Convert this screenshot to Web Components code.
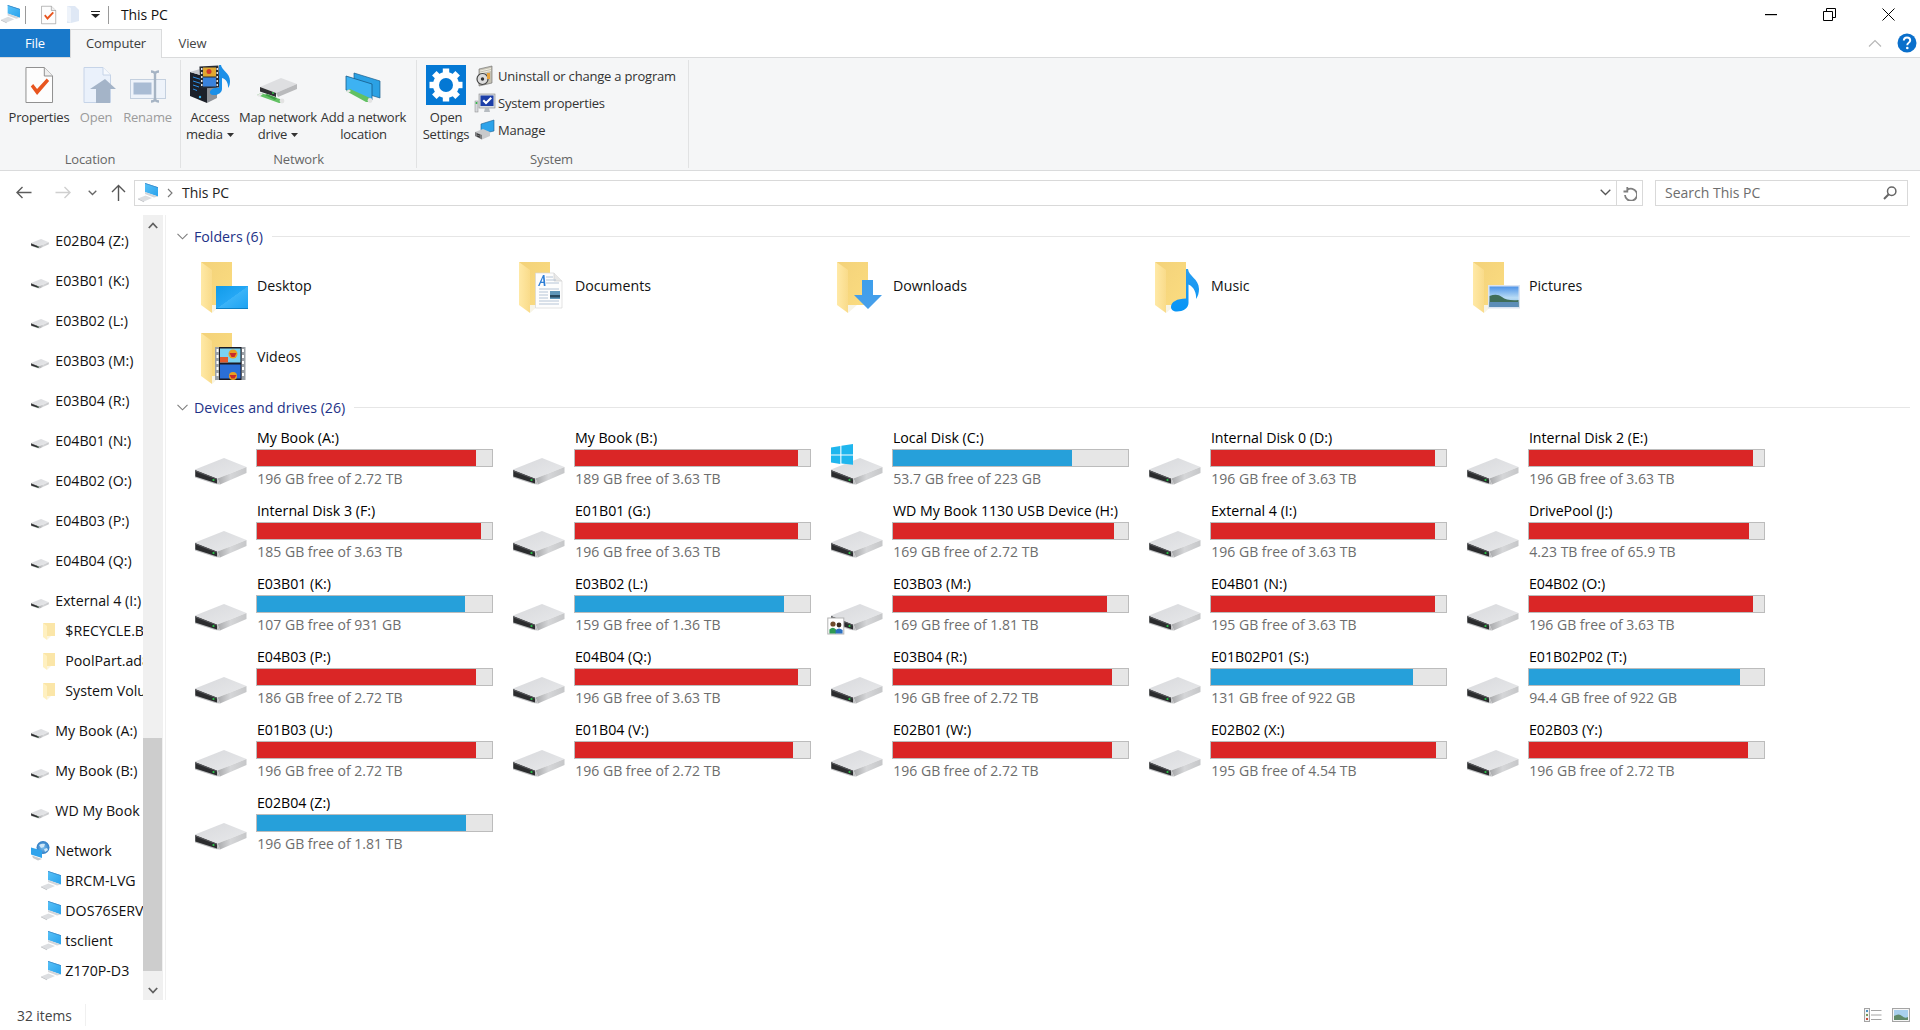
<!DOCTYPE html>
<html lang="en"><head><meta charset="utf-8"><title>This PC</title>
<style>
html,body{margin:0;padding:0;height:100%;background:#fff;overflow:hidden}
body{font-family:"Open Sans","Noto Sans","Liberation Sans",sans-serif;font-size:14px}
</style></head><body>
<x-app></x-app>
<script>
const FOLDER=`<defs><linearGradient id="fb" x1="0" y1="0" x2="1" y2="1"><stop offset="0" stop-color="#f3d27a"/><stop offset="1" stop-color="#fbdc80"/></linearGradient><linearGradient id="ff" x1="0" y1="0" x2="1" y2="0"><stop offset="0" stop-color="#ffe9a6"/><stop offset="1" stop-color="#f9db8a"/></linearGradient></defs><path d="M0 0H31V43H11Z" fill="url(#fb)"/><path d="M11 43H20L11 51Z" fill="#f7f4e6"/><path d="M0 0L11 8V51L0 43Z" fill="url(#ff)"/>`;
const DRIVE=`<defs><linearGradient id="ds" x1="0" y1="0" x2="1" y2="0"><stop offset="0" stop-color="#a8a9ab"/><stop offset=".45" stop-color="#d5d6d8"/><stop offset="1" stop-color="#c6c7c9"/></linearGradient><linearGradient id="dt" x1="0" y1="0" x2="1" y2="1"><stop offset="0" stop-color="#d8d9dc"/><stop offset="1" stop-color="#e8e9eb"/></linearGradient></defs><path d="M0 11.5L29 0L51.5 9L22.5 20.5Z" fill="url(#dt)"/><path d="M22.5 20.5L51.5 9V15L25 26.5Z" fill="url(#ds)"/><path d="M0 11.5L22.5 20.5L25 26.5L20 26L0 19.5Z" fill="#bfc0c2"/><path d="M.3 12.3L22 20.8V25.4L.3 18.5Z" fill="#2b2c2e"/><path d="M.3 12.3L22 20.8V21.8L.3 13.6Z" fill="#55565a"/><circle cx="18.5" cy="22" r="1.1" fill="#27c846"/>`;
const WIN=`<path d="M0 -10.6L9.3 -12V-3.6H0ZM10.4 -12.2L22 -14V-3.6H10.4ZM0 -2.5H9.3V6L0 4.6ZM10.4 -2.5H22V6.8L10.4 5.6Z" fill="#1fb6ee"/>`;
const SHARE=`<rect x="-3.2" y="14" width="16" height="16" fill="#fff" stroke="#b3b3b3"/><circle cx="2" cy="20" r="2.6" fill="#6e4a2c"/><path d="M-1.6 29.5V25.5Q2 22 5 25.5V29.5Z" fill="#2f9a52"/><circle cx="8" cy="21" r="2.4" fill="#3a2a20"/><path d="M4.6 29.5V26Q8 23 11.6 26V29.5Z" fill="#2c6fc0"/>`;
const PC=`<defs><linearGradient id="pcg" x1="0" y1="0" x2="1" y2="1"><stop offset="0" stop-color="#58c2f8"/><stop offset="1" stop-color="#2aa2ec"/></linearGradient></defs><path d="M7 0L20 4.2V13.5L7 9Z" fill="url(#pcg)"/><path d="M7 0L20 4.2V4.900L7 .7Z" fill="#3a86c4"/><path d="M7 9L20 13.5L16 14.6L7 11Z" fill="#d4d6da"/><path d="M0 15.5L7.5 12.4L14 15L6 18.5Z" fill="#dcdee1"/><path d="M0 15.5L6 18.5V19.3L0 16.3Z" fill="#b4b6ba"/>`;
const PAGE=(s,f,c)=>`<path d="M1 .5H${20}L${28.5} 9V35.5H1Z" fill="${f}" stroke="${s}"/><path d="M20 .5V9H28.5" fill="#efefef" stroke="${s}"/>${c}`;
const ICONS={
 folder:['0 0 48 51',FOLDER],
 desktop:['0 0 48 51',FOLDER+`<defs><linearGradient id="d1" x1="0" y1="0" x2="1" y2="1"><stop offset="0" stop-color="#119be9"/><stop offset=".5" stop-color="#24a7f5"/><stop offset=".51" stop-color="#3ab3f8"/><stop offset="1" stop-color="#1ca2f2"/></linearGradient></defs><rect x="15" y="24" width="32" height="23" fill="url(#d1)"/><rect x="15" y="46" width="32" height="1" fill="#0d7fc4"/>`],
 documents:['0 0 48 51',FOLDER+`<path d="M16.5 11H35L43 19V46H16.5Z" fill="#fdfdfd" stroke="#d7d7d7" stroke-width=".7"/><path d="M35 11V19H43" fill="#e8e8e8" stroke="#cfcfcf" stroke-width=".7"/><path d="M19 24L24 13H25.500L26.500 24H24.800L24.500 21H21.800L20.500 24ZM22.400 19.700H24.400L24 15.500Z" fill="#2f7fd6"/><path d="M27 15H34M27 18H37M27 21H40M20 27H40M20 30H29M20 33H29M20 36H29M20 39H40M20 42H40" stroke="#b5c4d6" stroke-width="1"/><rect x="31" y="29" width="10" height="8" fill="#5f96b8"/><rect x="31" y="33" width="10" height="2.5" fill="#27495f"/>`],
 downloads:['0 0 48 51',FOLDER+`<defs><linearGradient id="d2" x1="0" y1="0" x2="0" y2="1"><stop offset="0" stop-color="#3d9fec"/><stop offset="1" stop-color="#489fea"/></linearGradient></defs><path d="M25 18H36V33H45L31 47L17 33H25Z" fill="url(#d2)"/>`],
 music:['0 0 48 51',FOLDER+`<defs><linearGradient id="d3" x1="0" y1="0" x2="0" y2="1"><stop offset="0" stop-color="#2a9df0"/><stop offset="1" stop-color="#0795f6"/></linearGradient></defs><path d="M31 7H33C33.600 14 44 17 44 27C44 31 43 34 41 37C41.500 31 39 25 33.500 22.500V41C33.500 46 28 49.500 22 49.500C18 49.500 16 47.500 16 45C16 40 22 36.500 31 36.500Z" fill="url(#d3)"/>`],
 pictures:['0 0 48 51',FOLDER+`<defs><linearGradient id="d4" x1="0" y1="0" x2="0" y2="1"><stop offset="0" stop-color="#4f94e8"/><stop offset=".55" stop-color="#b9dcf5"/><stop offset="1" stop-color="#7db2d8"/></linearGradient></defs><rect x="15" y="23" width="32" height="23.500" fill="#dbe4f2"/><rect x="16.500" y="24.500" width="29" height="20.500" fill="url(#d4)"/><path d="M16.500 34Q24 31 29 35T45.500 38V45H16.500Z" fill="#3f6d58"/><rect x="16.500" y="40" width="29" height="5" fill="#5c8db8"/>`],
 videos:['0 0 48 51',FOLDER+`<rect x="14" y="14" width="30.500" height="33" fill="#9aa0a6"/><rect x="18" y="14" width="22.500" height="33" fill="#1a1a24"/><path d="M15.500 16h2v3h-2zM15.500 22h2v3h-2zM15.500 28h2v3h-2zM15.500 34h2v3h-2zM15.500 40h2v3h-2zM41 16h2v3h-2zM41 22h2v3h-2zM41 28h2v3h-2zM41 34h2v3h-2zM41 40h2v3h-2z" fill="#fff"/><rect x="19" y="15.500" width="20.500" height="14" fill="#7bd2f0"/><rect x="19" y="24" width="8" height="5.500" fill="#e25a2b"/><circle cx="32" cy="21" r="4.500" fill="#e8a020"/><path d="M28.500 20h7l-2 4h-3z" fill="#c92a2a"/><rect x="19" y="31.500" width="20.500" height="14" fill="#2b6fd6"/><circle cx="32" cy="43" r="4" fill="#e8a020"/><path d="M28.500 42h7l-2 3.500h-3z" fill="#c92a2a"/>`],
 drive:['0 0 52 28',DRIVE],
 cdrive:['0 0 52 28',DRIVE+WIN],
 sdrive:['0 0 52 28',DRIVE+SHARE],
 mfolder:['0 0 12 17',`<path d="M0 0H12V13H3.500Z" fill="#fbe6a8"/><path d="M0 0L4 3V17L0 14Z" fill="#fff0c0"/><path d="M4 13H8L4 17Z" fill="#fbf4de"/>`],
 pc:['0 0 20 20',PC],
 net:['0 0 19 19',`<defs><radialGradient id="g1"><stop offset="0" stop-color="#7fc0ee"/><stop offset="1" stop-color="#2f7cc4"/></radialGradient></defs><circle cx="12" cy="6.500" r="6.500" fill="url(#g1)"/><path d="M8 4q3 -2 6 -1l-1 3l-3 1zM13 8l3 -1l1 2l-3 2z" fill="#cfe7f7"/><path d="M0 6.500L11 9.500V17L0 13.500Z" fill="#2fa3ec"/><path d="M1 14.500L11 18L7 19.500L2 17Z" fill="#c5c8cc"/>`],
 check:['0 0 29 36',PAGE('#8f8f8f','#fdfdfd',`<path d="M6 19.500L8.500 17L12.500 22L22.500 11.500L25 14L12.500 28Z" fill="#e8551f"/>`)],
 chk2:['0 0 29 36',PAGE('#7a7a7a','#fdfdfd',`<path d="M6 19.500L8.500 17L12.500 22L22.500 11.500L25 14L12.500 28Z" fill="#e8551f"/>`)],
 open:['0 0 34 36',`<path d="M1 .5H20L27.500 8V35.500H1Z" fill="#eaf1fb" stroke="#c6d4e8"/><path d="M20 .5V8H27.500" fill="#f6f9fd" stroke="#c6d4e8"/><path d="M14 36V22H8L23 12L34 22H28V36Z" fill="#a4b4c8" transform="translate(-1 0)"/>`],
 rename:['0 0 36 33',`<rect x=".5" y="9.500" width="35" height="19" fill="#eef3fa" stroke="#c4d0df"/><rect x="3.500" y="12.500" width="18" height="12" fill="#a9bcd4"/><path d="M21 1.500Q24 1.500 25 3.500Q26 1.500 29 1.500M21 31.500Q24 31.500 25 29.500Q26 31.500 29 31.500M25 3.500V29.500" fill="none" stroke="#a6b4c4" stroke-width="2.400"/>`],
 media:['0 0 40 38',`<path d="M0 7L17 12V38L0 31Z" fill="#1c2029"/><path d="M17 12L27 9V33L17 38Z" fill="#8e9197"/><path d="M0 7L10 4L27 9L17 12Z" fill="#c9cbcf"/><path d="M3 12l8 2.500M3 16l8 2.500M3 20l6 2M3 24l4 1.500" stroke="#2c8fe6" stroke-width="1"/><circle cx="10" cy="32" r="1.200" fill="#35b6f2"/><rect x="10" y="1" width="19" height="22" fill="#262a33" transform="rotate(-3 20 12)"/><rect x="13" y="2.500" width="13" height="9" fill="#e0a830"/><rect x="13" y="12.500" width="13" height="9" fill="#3a82dc"/><circle cx="19" cy="6.500" r="2.500" fill="#d0392b"/><path d="M11 3h1.500v2H11zM11 7h1.500v2H11zM11 11h1.500v2H11zM11 15h1.500v2H11zM11 19h1.500v2H11zM26.500 3h1.500v2h-1.500zM26.500 7h1.500v2h-1.500zM26.500 11h1.500v2h-1.500zM26.500 15h1.500v2h-1.500zM26.500 19h1.500v2h-1.500z" fill="#e8e8e8"/><path d="M29 0H31C31.500 5 40 8 40 16C40 19 39.500 21 38 23C38.500 18 36 14 32 13V24C32 28 27 30.500 23 30C20 29.800 19 27 21 25C23 23 26 22.500 29 23Z" fill="#1a8fe8"/>`],
 mapdrive:['0 0 40 25',`<path d="M3 9L24 0L40 6L19 15Z" fill="#dedfe1"/><path d="M19 15L40 6V11L21 19Z" fill="#b9babc"/><path d="M3 9L19 15V19L3 13.500Z" fill="#2f3032"/><circle cx="16" cy="15" r=".9" fill="#36d04f"/><path d="M0 17L4 15L26 22L26 25L22 25Z" fill="#62c163"/><path d="M0 17L4 15L6 16L2 19Z" fill="#e8e8e8"/><circle cx="25" cy="23" r="2.400" fill="#e3e3e3"/><path d="M8 17L10 16L20 20L18 22Z" fill="#3e9f44"/>`],
 addnet:['0 0 34 30',`<path d="M8 0L34 8V25L8 17Z" fill="#2ba1e4" stroke="#1b5f8c" stroke-width=".7"/><path d="M0 3L26 11V27L0 17Z" fill="#3db2f2" stroke="#175a88" stroke-width=".8"/><path d="M0 18L4 16L24 25V29L20 29Z" fill="#62c163"/><circle cx="24" cy="27.500" r="2.400" fill="#e3e3e3"/><path d="M0 18L3 16.500L5 18L2 20Z" fill="#e6e6e6"/>`],
 gear:['0 0 40 40',`<rect width="40" height="40" fill="#0478d4"/><g fill="#fff"><rect x="16.800" y="3.500" width="6.400" height="33"/><rect x="16.800" y="3.500" width="6.400" height="33" transform="rotate(45 20 20)"/><rect x="16.800" y="3.500" width="6.400" height="33" transform="rotate(90 20 20)"/><rect x="16.800" y="3.500" width="6.400" height="33" transform="rotate(135 20 20)"/></g><circle cx="20" cy="20" r="10" fill="none" stroke="#fff" stroke-width="6"/><circle cx="20" cy="20" r="7" fill="#0478d4"/>`],
 uninstall:['0 0 18 20',`<path d="M4 3L17 0V17L4 20Z" fill="#c4c1b4" stroke="#6a6a6a" stroke-width=".6"/><path d="M5 5L16 2.500M5 7L16 4.500" stroke="#f1eee2" stroke-width="1"/><circle cx="7.500" cy="13" r="5.500" fill="#dcdcdc" stroke="#444" stroke-width="1.200"/><circle cx="7.500" cy="13" r="1.700" fill="#333"/><rect x="12" y="7" width="3" height="6" fill="#e8a33d"/>`],
 sysprop:['0 0 20 21',`<rect x="4" y="1" width="16" height="14" fill="#d8dce0" stroke="#888" stroke-width=".6"/><rect x="5.500" y="2.500" width="13" height="10.500" fill="#1c3ea8"/><path d="M7.500 8L9 6.500L11 8.500L15.500 4L17 5.500L11 11.500Z" fill="#fff"/><path d="M10 15H14L15 19H9Z" fill="#b7bcc1"/><rect x="0" y="8" width="3" height="11" fill="#d6d8dc" stroke="#888" stroke-width=".5"/><rect x=".7" y="9" width="1.600" height="2" fill="#35b84a"/>`],
 manage:['0 0 20 20',`<path d="M6 4L19 0V11L6 14Z" fill="#2da3ea" stroke="#1d5f90" stroke-width=".6"/><path d="M0 12L8 9L15 12V16L7 19.500L0 16Z" fill="#c9cacc"/><path d="M0 12L7 15V19.500L0 16Z" fill="#7b7c7e"/><path d="M2 14l3 1.200M2 16l3 1.200" stroke="#333"/>`]
};
function ce(name,html){customElements.define(name,class extends HTMLElement{constructor(){super();this.attachShadow({mode:'open'}).innerHTML=typeof html==='function'?html(this):html}})}
const A=(e,n,d='')=>e.getAttribute(n)??d;

customElements.define('x-ico',class extends HTMLElement{
 connectedCallback(){if(this.shadowRoot)return;const[vb,b]=ICONS[A(this,'name')];const r=this.attachShadow({mode:'open'});
 r.innerHTML=`<style>:host{display:block;flex:none;line-height:0}svg{display:block;overflow:visible}</style><svg xmlns="http://www.w3.org/2000/svg" viewBox="${vb}" width="${A(this,'w')}" height="${A(this,'h')}" preserveAspectRatio="none">${b}</svg>`}
});
customElements.define('x-app',class extends HTMLElement{constructor(){super();const r=this.attachShadow({mode:'open'});
r.innerHTML=`<style>:host{display:flex;flex-direction:column;width:1920px;height:1030px;overflow:hidden;font-family:"Open Sans","Noto Sans","Liberation Sans",sans-serif;font-size:14px;color:#000;background:#fff}
x-main{flex:1;min-height:0}</style>
<x-titlebar></x-titlebar><x-tabs></x-tabs><x-ribbon></x-ribbon><x-addr></x-addr><x-main></x-main><x-status></x-status>`}});

ce('x-titlebar',`<style>:host{display:flex;align-items:center;height:29px;flex:none;position:relative;font-size:14px}
.s{width:1px;height:18px;background:#9a9a9a}
.w{margin-left:auto;display:flex;align-items:center}
svg{display:block}</style>
<x-ico name="pc" w="19" h="19" style="margin:0 0 0 1px"></x-ico><span class="s" style="margin-left:5px"></span>
<x-ico name="chk2" w="15" h="18" style="margin-left:15px"></x-ico>
<svg width="12" height="17" style="margin-left:11px"><path d="M0 0H8L12 4V15L4 17H0Z" fill="#dfe8f5"/><path d="M0 0L4 2V17L0 15Z" fill="#eef3fa"/></svg>
<svg width="9" height="7" style="margin-left:12px"><path d="M0 0H9V1H0ZM0 3H9L4.500 7Z" fill="#222"/></svg>
<span class="s" style="margin-left:8px"></span><span style="margin-left:12px;color:#111;letter-spacing:-.1px">This PC</span>
<div class="w"><svg width="12" height="2" style="margin-right:46px"><rect width="12" height="1.200" fill="#000"/></svg>
<svg width="13" height="13" style="margin-right:46px"><path d="M.5 3.500H9.500V12.500H.5ZM3.500 3.500V.5H12.500V9.500H9.500" fill="none" stroke="#000"/></svg>
<svg width="13" height="13" style="margin-right:25px"><path d="M.5 .5L12.500 12.500M12.500 .5L.5 12.500" stroke="#000"/></svg></div>`);

ce('x-tabs',`<style>:host{display:flex;height:28px;flex:none;align-items:stretch;font-size:13px;letter-spacing:-.15px;box-sizing:border-box;position:relative;z-index:1}
div{display:flex;align-items:center;justify-content:center;box-sizing:border-box;color:#444}
.f{width:70px;background:#1979ca;color:#fff;height:28px;padding-bottom:1px}
.c{width:92px;background:#f5f6f7;border:1px solid #dadbdc;border-bottom:0;height:29px;color:#3c3c3c;padding-bottom:2px}
.v{width:61px;padding-left:0;margin-left:0;padding-bottom:1px}
.r{margin-left:auto;gap:15px;padding-right:3px}
svg{display:block}</style>
<div class="f">File</div><div class="c">Computer</div><div class="v">View</div>
<div class="r"><svg width="14" height="8"><path d="M1 7.500L7 1.500L13 7.500" fill="none" stroke="#b8b8b8" stroke-width="1.200"/></svg>
<svg width="20" height="20" viewBox="0 0 20 20"><circle cx="10" cy="10" r="9.500" fill="#0a6fcb"/><path d="M6.800 7.500Q7 4.500 10 4.500Q13.200 4.500 13.200 7.300Q13.200 9 11.500 10Q10.300 10.700 10.300 12.200" fill="none" stroke="#fff" stroke-width="2"/><circle cx="10.300" cy="15" r="1.300" fill="#fff"/></svg></div>`);

ce('x-ribbon',`<style>:host{display:flex;height:114px;flex:none;box-sizing:border-box;background:#f5f6f7;border-top:1px solid #dadbdc;border-bottom:1px solid #dadbdc;padding:2px 0 2px;margin-top:0}</style>
<x-group w="181" label="Location" pad="4">
 <x-btn w="70" icon="check" iw="28" ih="36">Properties</x-btn>
 <x-btn w="44" icon="open" iw="34" ih="36" ml="7" off>Open</x-btn>
 <x-btn w="59" icon="rename" iw="36" ih="33" off>Rename</x-btn>
</x-group>
<x-group w="236" label="Network" pad="3">
 <x-btn w="52" icon="media" iw="40" ih="38">Access<br>media <x-caret></x-caret></x-btn>
 <x-btn w="84" icon="mapdrive" iw="40" ih="25" ml="-2">Map network<br>drive <x-caret></x-caret></x-btn>
 <x-btn w="87" icon="addnet" iw="34" ih="30" ml="-2">Add a network<br>location</x-btn>
</x-group>
<x-group w="272" label="System" pad="4">
 <x-btn w="50" icon="gear" iw="40" ih="40" up="2">Open<br>Settings</x-btn>
 <x-list>
  <x-li icon="uninstall" iw="18" ih="20">Uninstall or change a program</x-li>
  <x-li icon="sysprop" iw="20" ih="21">System properties</x-li>
  <x-li icon="manage" iw="20" ih="20">Manage</x-li>
 </x-list>
</x-group>`);

ce('x-group',e=>`<style>:host{display:flex;flex-direction:column;width:${A(e,'w')}px;box-sizing:border-box;border-right:1px solid #e1e2e3;height:108px;flex:none}
.b{flex:1;display:flex;align-items:flex-start;padding-left:${A(e,'pad')}px;min-height:0}
.l{height:16px;line-height:15px;text-align:center;font-size:13px;letter-spacing:-.15px;color:#666;margin-top:2px;padding-right:${A(e,'label')==='System'?2:0}px}</style>
<div class="b"><slot></slot></div><div class="l">${A(e,'label')}</div>`);

ce('x-btn',e=>`<style>:host{display:flex;flex-direction:column;align-items:center;width:${A(e,'w')}px;flex:none;font-size:13px;letter-spacing:-.2px;line-height:17px;text-align:center;color:${e.hasAttribute('off')?'#9b9b9b':'#333'}}
.i{height:44px;display:flex;align-items:flex-end;padding-bottom:1px;box-sizing:border-box;margin-bottom:5px}
x-ico{margin-bottom:${-(+A(e,'up','0'))}px;margin-left:${A(e,'ml','0')}px}
.t{white-space:nowrap}</style>
<div class="i"><x-ico name="${A(e,'icon')}" w="${A(e,'iw')}" h="${A(e,'ih')}"></x-ico></div><div class="t"><slot></slot></div>`);

ce('x-caret',`<style>:host{display:inline-block;width:7px;height:4px;vertical-align:2px;margin-left:1px}svg{display:block}</style><svg width="7" height="4"><path d="M0 0H7L3.500 4Z" fill="#333"/></svg>`);
ce('x-list',`<style>:host{display:flex;flex-direction:column;margin-left:4px;padding-top:2.500px;gap:0}</style><slot></slot>`);
ce('x-li',e=>`<style>:host{display:flex;align-items:center;height:27px;font-size:13px;letter-spacing:-.2px;color:#333;white-space:nowrap}
.k{width:23px;flex:none}</style><div class="k"><x-ico name="${A(e,'icon')}" w="${A(e,'iw')}" h="${A(e,'ih')}"></x-ico></div><slot></slot>`);

ce('x-addr',`<style>:host{display:flex;height:44px;flex:none;box-sizing:border-box;padding-top:9px;align-items:flex-start;font-size:14px}
svg{display:block}
.n{width:134px;height:25.500px;position:relative;flex:none;display:flex;align-items:center}
.a{flex:none;width:1509px;height:25.500px;box-sizing:border-box;border:1px solid #d9d9d9;display:flex;align-items:center;color:#222}
.sep{width:1px;height:100%;background:#d9d9d9;margin:0 5px 0 5px}
.q{width:253px;height:25.500px;box-sizing:border-box;border:1px solid #d9d9d9;margin-left:12px;display:flex;align-items:center;color:#6d6d6d;padding-left:9px;flex:none}
</style>
<div class="n"><svg width="16" height="13" style="margin-left:16px"><path d="M15.500 6.500H1M6.500 1L1 6.500L6.500 12" fill="none" stroke="#5c5c5c" stroke-width="1.400"/></svg>
<svg width="16" height="13" style="margin-left:23px"><path d="M.5 6.500H15M9.500 1L15 6.500L9.500 12" fill="none" stroke="#cfcfcf" stroke-width="1.400"/></svg>
<svg width="9" height="6" style="margin-left:17px"><path d="M.7 .7L4.500 4.500L8.300 .7" fill="none" stroke="#666" stroke-width="1.300"/></svg>
<svg width="15" height="17" style="margin-left:14px"><path d="M7.500 17V1.500M1 8L7.500 1.500L14 8" fill="none" stroke="#555" stroke-width="1.400"/></svg></div>
<div class="a"><x-ico name="pc" w="20" h="20" style="margin-left:3px"></x-ico>
<svg width="6" height="10" style="margin-left:9px"><path d="M1 1L5 5L1 9" fill="none" stroke="#777" stroke-width="1.100"/></svg>
<span style="margin-left:9px;letter-spacing:-.05px">This PC</span>
<svg width="11" height="7" style="margin-left:auto"><path d="M.7 .7L5.500 5.500L10.300 .7" fill="none" stroke="#555" stroke-width="1.300"/></svg><span class="sep"></span>
<svg width="15" height="16" style="margin-right:5px" viewBox="0 0 15 16"><path d="M3.800 1V5.500H0M3.800 4A6 6 0 1 1 1.500 9" fill="none" stroke="#7f7f7f" stroke-width="1.800" transform="translate(1.500 1)"/></svg></div>
<div class="q"><span style="flex:1">Search This PC</span><svg width="14" height="14" style="margin-right:10px"><circle cx="8.700" cy="5.300" r="4.200" fill="none" stroke="#666" stroke-width="1.500"/><path d="M5.700 8.300L1 13" stroke="#666" stroke-width="2"/></svg></div>`);

ce('x-main',`<style>:host{display:flex;height:785px}x-content{flex:1;min-width:0}</style><x-nav></x-nav><x-content></x-content>`);

const TREE=[['E02B04 (Z:)'],['E03B01 (K:)'],['E03B02 (L:)'],['E03B03 (M:)'],['E03B04 (R:)'],['E04B01 (N:)'],['E04B02 (O:)'],['E04B03 (P:)'],['E04B04 (Q:)'],['External 4 (I:)'],
 ['$RECYCLE.BIN',1,'mfolder'],['PoolPart.ad8f3c21',1,'mfolder'],['System Volume Information',1,'mfolder'],
 ['My Book (A:)'],['My Book (B:)'],['WD My Book 1130 USB Device (H:)'],['Network',0,'net'],
 ['BRCM-LVG',1,'pc'],['DOS76SERVER',1,'pc'],['tsclient',1,'pc'],['Z170P-D3',1,'pc']];
ce('x-nav',`<style>:host{display:flex;width:166px;box-sizing:border-box;border-right:1px solid #f0f0f0;flex:none}
.t{width:143px;overflow:hidden;padding-top:.7px;flex:none}</style>
<div class="t">${TREE.map(([t,c,i])=>`<x-row ${c?'child':''} icon="${i||'drive'}">${t}</x-row>`).join('')}</div><x-scroll></x-scroll>`);
ce('x-row',e=>{const c=e.hasAttribute('child'),i=A(e,'icon');const ic=i==='drive'?'<x-ico name="drive" w="18" h="10" style="margin-top:7px"></x-ico>':i==='mfolder'?'<x-ico name="mfolder" w="12" h="17" style="margin:1px 0 0 3px"></x-ico>':i==='net'?'<x-ico name="net" w="19" h="19"></x-ico>':'<x-ico name="pc" w="20" h="20" style="margin-left:1px"></x-ico>';
return `<style>:host{display:flex;align-items:center;height:30px;margin-top:${c?0:10}px;padding-left:${c?40:31}px;white-space:nowrap;color:#111;font-size:14.200px}
.k{width:${c?25.300:24.300}px;flex:none}</style><div class="k">${ic}</div><slot></slot>`});
ce('x-scroll',`<style>:host{display:flex;flex-direction:column;width:20px;background:#f0f0f0;flex:none}
.b{height:20px;display:flex;align-items:center;justify-content:center;flex:none}
.s{height:502.700px;flex:none}.th{height:233.300px;width:19px;background:#cdcdcd;flex:none}.g{flex:1}svg{display:block}</style>
<div class="b"><svg width="10" height="7"><path d="M.8 6L5 1.500L9.200 6" fill="none" stroke="#606060" stroke-width="1.800"/></svg></div><div class="s"></div><div class="th"></div><div class="g"></div>
<div class="b"><svg width="10" height="7"><path d="M.8 1L5 5.500L9.200 1" fill="none" stroke="#606060" stroke-width="1.800"/></svg></div>`);

const GROUPS=[['My Book (A:)','196 GB free of 2.72 TB',93.4],['My Book (B:)','189 GB free of 3.63 TB',95.2],['Local Disk (C:)','53.7 GB free of 223 GB',76.3,'cdrive'],['Internal Disk 0 (D:)','196 GB free of 3.63 TB',95.3],['Internal Disk 2 (E:)','196 GB free of 3.63 TB',95.3],
['Internal Disk 3 (F:)','185 GB free of 3.63 TB',95.5],['E01B01 (G:)','196 GB free of 3.63 TB',95],['WD My Book 1130 USB Device (H:)','169 GB free of 2.72 TB',94],['External 4 (I:)','196 GB free of 3.63 TB',95.3],['DrivePool (J:)','4.23 TB free of 65.9 TB',93.8],
['E03B01 (K:)','107 GB free of 931 GB',88.5],['E03B02 (L:)','159 GB free of 1.36 TB',88.9],['E03B03 (M:)','169 GB free of 1.81 TB',91,'sdrive'],['E04B01 (N:)','195 GB free of 3.63 TB',95.3],['E04B02 (O:)','196 GB free of 3.63 TB',95.3],
['E04B03 (P:)','186 GB free of 2.72 TB',93.3],['E04B04 (Q:)','196 GB free of 3.63 TB',95],['E03B04 (R:)','196 GB free of 2.72 TB',93.4],['E01B02P01 (S:)','131 GB free of 922 GB',86.2],['E01B02P02 (T:)','94.4 GB free of 922 GB',90],
['E01B03 (U:)','196 GB free of 2.72 TB',93.4],['E01B04 (V:)','196 GB free of 2.72 TB',93],['E02B01 (W:)','196 GB free of 2.72 TB',93.4],['E02B02 (X:)','195 GB free of 4.54 TB',95.8],['E02B03 (Y:)','196 GB free of 2.72 TB',93.4],
['E02B04 (Z:)','196 GB free of 1.81 TB',89]];
const BLUE=new Set(['Local Disk (C:)','E03B01 (K:)','E03B02 (L:)','E01B02P01 (S:)','E01B02P02 (T:)','E02B04 (Z:)']);
ce('x-content',`<style>:host{display:block;padding-top:11px;overflow:hidden}
.f,.d{display:grid;grid-template-columns:repeat(5,318px);padding-left:29px}
.f{margin:4.500px 0 4.500px;grid-auto-rows:71px}.d{margin-top:10.700px;grid-auto-rows:73px}</style>
<x-head>Folders (6)</x-head>
<div class="f">${['desktop:Desktop','documents:Documents','downloads:Downloads','music:Music','pictures:Pictures','videos:Videos'].map(s=>{const[a,b]=s.split(':');return `<x-folder icon="${a}">${b}</x-folder>`}).join('')}</div>
<x-head>Devices and drives (26)</x-head>
<div class="d">${GROUPS.map(([n,s,p,i])=>`<x-drive icon="${i||'drive'}" pct="${p}" sub="${s}" ${BLUE.has(n)?'blue':''}>${n}</x-drive>`).join('')}</div>`);
ce('x-head',`<style>:host{display:flex;align-items:center;height:20px;color:#1e3287;font-size:14.200px;white-space:nowrap}
svg{margin-left:11px;margin-right:6px;display:block;flex:none}
i{flex:1;height:1px;background:#e6e6e6;margin:0 10px 0 9px}</style>
<svg width="11" height="7"><path d="M.5 .8L5.500 5.800L10.500 .8" fill="none" stroke="#7d7d7d" stroke-width="1.100"/></svg><slot></slot><i></i>`);
ce('x-folder',e=>`<style>:host{display:flex;align-items:center;font-size:14.200px;color:#111;padding-left:6px;padding-bottom:2px}
x-ico{margin:4px 8px 0 0}</style><x-ico name="${A(e,'icon')}" w="48" h="51"></x-ico><slot></slot>`);
ce('x-drive',e=>{const p=+A(e,'pct'),c=e.hasAttribute('blue')?'#26a0da':'#da2626';return `<style>:host{display:flex;align-items:flex-start;font-size:14.200px;color:#000;margin-top:-1px}
x-ico{margin:31px 9.300px 0 0}
.n{line-height:21px;height:20px;white-space:nowrap;padding-left:.6px}
.b{width:236.400px;height:18px;box-sizing:border-box;border:1px solid #bcbcbc;background:#e6e6e6;margin:2.300px 0 1px}
.b div{height:100%;background:${c};width:${p}%}
.s{line-height:22px;height:22px;color:#6d6d6d;white-space:nowrap;padding-left:1px;font-size:14px}</style>
<x-ico name="${A(e,'icon')}" w="52" h="28"></x-ico><div><div class="n"><slot></slot></div><div class="b"><div></div></div><div class="s">${A(e,'sub')}</div></div>`});

ce('x-status',`<style>:host{display:flex;align-items:center;height:30px;flex:none;padding-left:17px;font-size:13.800px;color:#444;padding-right:10px}
i{width:1px;height:22px;background:#f0f0f0;margin-left:13px}svg{display:block}</style>
<span>32 items</span><i></i>
<svg width="18" height="14" style="margin-left:auto"><rect x=".5" y=".5" width="5" height="13" fill="#f4f4f4" stroke="#a4a4a4"/><rect x="2" y="2" width="2" height="2" fill="#4b90c0"/><rect x="2" y="6" width="2" height="2" fill="#7a9a5a"/><rect x="2" y="10" width="2" height="2" fill="#c84a3a"/><path d="M7 2.500H17.500M7 7H17.500M7 11.500H17.500" stroke="#a4a4a4"/></svg>
<svg width="18" height="14" style="margin-left:10px"><rect x=".5" y=".5" width="17" height="13" fill="#fff" stroke="#a4a4a4" stroke-width="1.200"/><rect x="2" y="2" width="14" height="10" fill="#a8d0ee"/><path d="M2 8Q7 5 10 8T16 9V12H2Z" fill="#5f8a6a"/></svg>`);
</script></body></html>
